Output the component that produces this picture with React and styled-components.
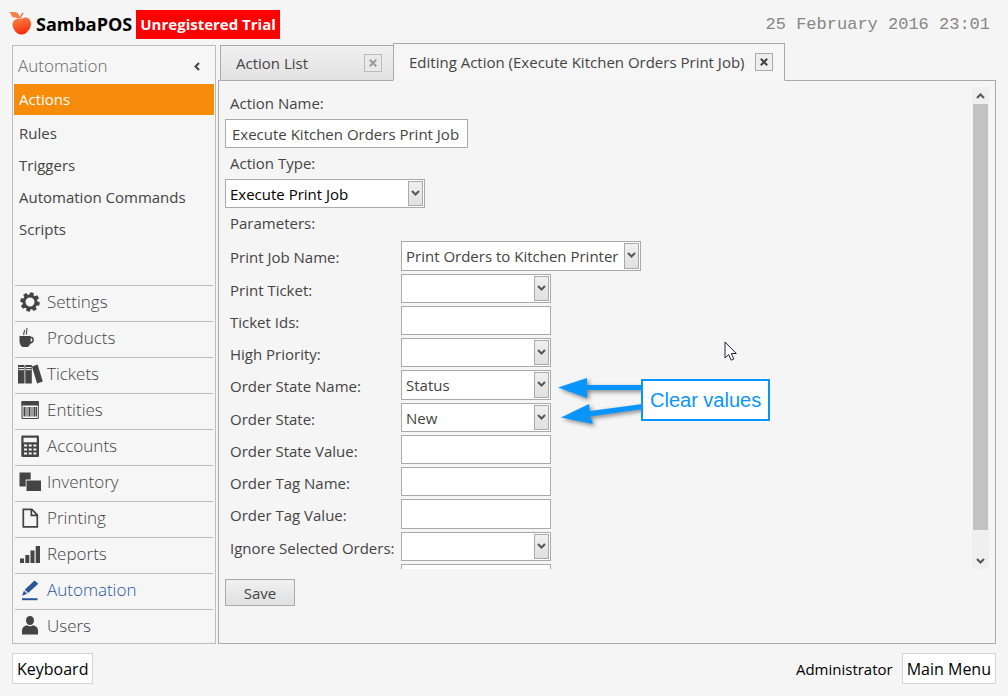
import React from "react";
import styled, { createGlobalStyle } from "styled-components";

const GlobalStyle = createGlobalStyle`
  * { box-sizing: border-box; }
  body {
    margin: 0;
    background: #f5f5f5;
    color: #444;
    font: 15px/20px "Open Sans", "Noto Sans", sans-serif;
  }
  button, input, select { font: inherit; color: inherit; margin: 0; padding: 0; }
  ul { list-style: none; margin: 0; padding: 0; }
  svg { display: block; }
`;

const Page = styled.div`
  display: flex;
  flex-direction: column;
  height: 100vh;
  padding: 0 12px;
`;

const Header = styled.header`
  display: flex;
  align-items: center;
  flex: none;
  height: 43px;
  padding: 5px 6px 0 0;
`;

const Brand = styled.h1`
  display: flex;
  align-items: center;
  gap: 3px;
  margin: 0 4px 0 -3px;
  color: #000;
  font-size: 18px;
  line-height: 28px;
  font-weight: 700;
`;

const TrialBadge = styled.strong`
  padding: 0 4px;
  background: #f00;
  color: #fff;
  font-size: 15px;
  line-height: 29px;
`;

const Clock = styled.time`
  margin-left: auto;
  padding-top: 2px;
  color: #868686;
  font-family: "Liberation Mono", monospace;
  font-size: 17px;
`;

const Body = styled.div`
  display: flex;
  flex: 1;
  gap: 2px;
  min-height: 0;
`;

const Sidebar = styled.nav`
  display: flex;
  flex-direction: column;
  flex: none;
  width: 204px;
  margin-top: 2px;
  padding: 0 1px;
  border: 1px solid #bcbcbc;
  background: #f6f6f6;
`;

const SidebarHead = styled.div`
  display: flex;
  align-items: center;
  justify-content: space-between;
  height: 38px;
  padding: 2px 11px 0 4px;
  color: #666;
  font-size: 17px;
  font-weight: 300;
`;

const IconButton = styled.button`
  display: grid;
  place-items: center;
  width: 12px;
  height: 18px;
  border: 0;
  background: none;
`;

const EntryLink = styled.a`
  display: block;
  margin-bottom: ${(p) => (p.$active ? 2 : 0)}px;
  padding-left: 5px;
  color: ${(p) => (p.$active ? "#fff" : "#444")};
  background: ${(p) => (p.$active ? "#f78c0a" : "transparent")};
  line-height: ${(p) => (p.$active ? 31 : 32)}px;
  text-decoration: none;
`;

const ModuleList = styled.ul`
  margin-top: auto;
  padding: 0 1px;
  li:last-child a { height: 34px; padding-bottom: 1px; }
`;

const ModuleLink = styled.a`
  display: flex;
  align-items: center;
  gap: 3px;
  height: 36px;
  padding: 0 0 3px 2px;
  border-top: 1px solid #bcbcbc;
  color: ${(p) => (p.$active ? "#2b579a" : "#444")};
  font-size: 17px;
  font-weight: 300;
  text-decoration: none;
  svg { flex: none; }
`;

const Workspace = styled.main`
  display: flex;
  flex-direction: column;
  flex: 1;
  min-width: 0;
`;

const Tabs = styled.div`
  display: flex;
  align-items: flex-end;
  flex: none;
  height: 38px;
  margin-bottom: -1px;
  padding-left: 2px;
  position: relative;
  z-index: 1;
`;

const Tab = styled.div`
  display: flex;
  align-items: center;
  justify-content: space-between;
  width: ${(p) => (p.$active ? 392 : 174)}px;
  height: ${(p) => (p.$active ? 38 : 36)}px;
  margin-right: -1px;
  padding: 0 11px 0 15px;
  border: 1px solid #aaa;
  border-bottom-color: ${(p) => (p.$active ? "#f5f5f5" : "#aaa")};
  background: ${(p) => (p.$active ? "#f6f6f6" : "linear-gradient(#f0f0f0, #e2e2e2)")};
`;

const TabTitle = styled.button`
  border: 0;
  background: none;
  white-space: nowrap;
`;

const TabClose = styled.button`
  display: grid;
  place-items: center;
  flex: none;
  width: 18px;
  height: 18px;
  border: 1px solid ${(p) => (p.$muted ? "#bbb" : "#aaa")};
  background: ${(p) => (p.$muted ? "#e9e9e9" : "#eee")};
  color: ${(p) => (p.$muted ? "#999" : "#444")};
`;

const Panel = styled.section`
  position: relative;
  display: flex;
  flex-direction: column;
  flex: 1;
  min-height: 0;
  padding: 6px 6px 37px;
  border: 1px solid #aaa;
`;

const ScrollArea = styled.div`
  display: flex;
  justify-content: space-between;
  flex: 1;
  min-height: 0;
`;

const Form = styled.div`
  flex: 1;
  padding-top: 1px;
  overflow: hidden;
`;

const Caption = styled.label`
  display: block;
  padding-left: 5px;
  line-height: 31px;
`;

const TextBox = styled.input`
  display: block;
  width: ${(p) => p.$width}px;
  height: 29px;
  padding: 0 6px;
  border: 1px solid #aaa;
  background: #fff;
`;

const Combo = styled.div`
  display: grid;
  grid-template-columns: 1fr 17px;
  width: ${(p) => p.$width}px;
  height: 29px;
  border: 1px solid #aaa;
  background: #fff;
  color: ${(p) => (p.$dark ? "#000" : "#444")};
`;

const ComboSelect = styled.select`
  grid-area: 1 / 1 / 2 / 3;
  appearance: none;
  min-width: 0;
  padding-left: 4px;
  border: 0;
  background: none;
`;

const ComboArrow = styled.span`
  grid-area: 1 / 2;
  display: grid;
  place-items: center;
  margin: 1px;
  padding-bottom: 2px;
  border: 1px solid #aaa;
  background: linear-gradient(#f0f0f0, #e0e0e0);
  pointer-events: none;
`;

const Parameters = styled.div`
  display: grid;
  gap: 3px;
  margin-top: 2px;
`;

const ParameterRow = styled.div`
  display: grid;
  grid-template: 100% / 176px 1fr;
  height: 29px;
  &:nth-child(4n + 1) { height: 30px; }
  & > * { height: 100%; }
  & > label { padding-left: 5px; line-height: 32px; white-space: nowrap; }
`;

const ScrollBar = styled.div`
  display: flex;
  flex-direction: column;
  width: 17px;
  background: #efefef;
`;

const ScrollButton = styled.button`
  display: grid;
  place-items: center;
  height: 17px;
  border: 0;
  background: none;
`;

const ScrollTrack = styled.div`
  flex: 1;
  padding: 0 1px 22px;
`;

const ScrollThumb = styled.div`
  height: 100%;
  background: #c2c2c2;
`;

const SaveButton = styled.button`
  flex: none;
  width: 70px;
  height: 27px;
  margin-top: 10px;
  border: 1px solid #aaa;
  background: linear-gradient(#f0f0f0, #e0e0e0);
`;

const Footer = styled.footer`
  display: flex;
  align-items: center;
  flex: none;
  gap: 9px;
  padding: 9px 0 12px;
  color: #000;
`;

const FooterButton = styled.button`
  height: 31px;
  padding: 0 4px;
  border: 1px solid #d4d4d4;
  background: #fff;
  font-size: 16px;
`;

const UserName = styled.span`
  margin-left: auto;
`;

const Arrows = styled.svg`
  position: absolute;
  left: 336px;
  top: 289px;
  filter: drop-shadow(2px 2px 2px rgba(0, 0, 0, 0.45));
`;

const Note = styled.div`
  position: absolute;
  left: 422px;
  top: 298px;
  padding: 0 7px;
  border: 2px solid #0895ff;
  background: #fff;
  color: #0895ff;
  font: 20px/38px "Liberation Sans", sans-serif;
  white-space: nowrap;
`;

const Pointer = styled.svg`
  position: absolute;
  left: 505px;
  top: 260px;
`;

const Chevron = ({ up }) => (
  <svg width="9" height="8" viewBox="0 0 9 8" fill="none" stroke="#555" strokeWidth="2">
    <path d={up ? "M1 6l3.500-3.500L8 6" : "M1 2l3.500 3.500L8 2"} />
  </svg>
);

const Cross = () => (
  <svg width="8" height="8" viewBox="0 0 8 8" stroke="currentColor" strokeWidth="2">
    <path d="M.8 .8l6.400 6.400M7.200 .8L.8 7.200" />
  </svg>
);

const Fruit = () => (
  <svg width="24" height="26" viewBox="0 0 24 26">
    <defs>
      <linearGradient id="fruit" x1="0" y1="0" x2="0.3" y2="1">
        <stop offset="0" stopColor="#ff8a50" />
        <stop offset="1" stopColor="#f52f08" />
      </linearGradient>
    </defs>
    <path fill="url(#fruit)" d="M12.500 8C15 5.500 20 6 21.500 10c1.300 4-.5 8-3 10.500-1.700 1.800-3 3-5.500 3-3.500.2-6-1.500-8-5-2-3.700-2-7.500.5-9.500 2-1.700 5-2 7-1z" />
    <path fill="#ff7d4a" d="M0 1c3 .4 7-.5 9 1.500 1 1.200 1.500 3 2.500 4.500C7 7 3.500 7 2.500 4.500 2 3 1.500 2 0 1z" />
    <path d="M11.500 7.500c0-2 1-4 2.700-5.500" fill="none" stroke="#e86030" strokeWidth="1.200" />
  </svg>
);

const gearTeeth = [0, 45, 90, 135, 180, 225, 270, 315];

const drawings = {
  Settings: (
    <>
      <circle cx="13" cy="12" r="6" fill="none" stroke="currentColor" strokeWidth="3" />
      {gearTeeth.map((a) => (
        <path key={a} d="M10.800 5.500l.4-3.200h3.600l.4 3.200z" transform={`rotate(${a + 12} 13 12)`} />
      ))}
    </>
  ),
  Products: (
    <>
      <path d="M2.500 10h11.200v5c0 3-1.400 5.200-3.200 6H5.700c-1.800-.8-3.200-3-3.200-6z" />
      <path d="M13 11.500h1.500c2.400 0 2.400 5-1.800 5.500" fill="none" stroke="currentColor" strokeWidth="1.500" />
      <path d="M7.200 9c-2-2 1.400-2.800 0-5M9.800 8.500C8 6 11 5 9.700 2" fill="none" stroke="currentColor" strokeWidth="1.100" />
    </>
  ),
  Tickets: (
    <>
      <path d="M1 3h6.500v18.500H1zM8.300 3h6.500v18.500H8.300zM14.900 4.500l5.700-1.900 5.200 17-5.700 1.900z" />
      <path d="M1.500 5.500h5.500M1.500 7.700h5.500M8.800 5.500h5.500M8.800 7.700h5.500" stroke="#f6f6f6" strokeWidth="1" />
    </>
  ),
  Entities: (
    <>
      <path d="M4.500 3h17.300v4.500H4.500z" />
      <path d="M5 4v16.500h16.300V4" fill="none" stroke="currentColor" />
      <path d="M7.500 9v9.500M12.500 9v9.500M17.500 9v9.500" stroke="currentColor" strokeWidth="2" />
      <path d="M10 9v9.500M15 9v9.500M19.500 9v9.500" stroke="currentColor" strokeWidth="1" />
    </>
  ),
  Accounts: (
    <>
      <path d="M5.500 1.500h15.300q1.200 0 1.200 1.200v19q0 1.200-1.200 1.200H5.500q-1.200 0-1.200-1.200v-19q0-1.200 1.200-1.200z" />
      <path fill="#f6f6f6" d="M6.500 3.700h13.300v4.500H6.500zM7 10.500h3v2H7zM11.700 10.500h3v2h-3zM16.400 10.500h3v2h-3zM7 14.500h3v2H7zM11.700 14.500h3v2h-3zM16.400 14.500h3v2h-3zM7 18.500h3v2H7zM11.700 18.500h3v2h-3zM16.400 18.500h3v2h-3z" />
    </>
  ),
  Inventory: <path d="M2.500 2.500h11.200v7h-5v7H2.500zM9.500 10.500H24V21H9.500z" />,
  Printing: (
    <path d="M6.300 3.300h8.500l5.500 5.500v12H6.300zM14.300 3.500v5.800h5.800" fill="none" stroke="currentColor" strokeWidth="1.700" />
  ),
  Reports: <path d="M3 16.500h4V21H3zM8.300 13h4v8h-4zM13.500 8.500h4V21h-4zM18.700 4H23v17h-4.300z" />,
  Automation: (
    <>
      <path d="M17.500 2.500l3.800 3.200L11.200 15l-3.500-3.200zM6.900 12.700l3.300 3L5 17.800z" />
      <path d="M5 20.200h15.500v2H5z" />
    </>
  ),
  Users: (
    <>
      <ellipse cx="13" cy="6.500" rx="4" ry="4.500" />
      <path d="M5 20.500v-4c0-3 2-4.500 5-5.200 1.500 1.200 4.500 1.200 6 0 3 .7 5 2.200 5 5.200v4z" />
    </>
  ),
};

const ModuleIcon = ({ name }) => (
  <svg width="27" height="24" viewBox="0 0 27 24" fill="currentColor" aria-hidden="true">
    {drawings[name]}
  </svg>
);

const entries = ["Actions", "Rules", "Triggers", "Automation Commands", "Scripts"];

const parameters = [
  { label: "Print Job Name:", value: "Print Orders to Kitchen Printer", combo: true, width: 240 },
  { label: "Print Ticket:", value: "", combo: true },
  { label: "Ticket Ids:", value: "" },
  { label: "High Priority:", value: "", combo: true },
  { label: "Order State Name:", value: "Status", combo: true },
  { label: "Order State:", value: "New", combo: true },
  { label: "Order State Value:", value: "" },
  { label: "Order Tag Name:", value: "" },
  { label: "Order Tag Value:", value: "" },
  { label: "Ignore Selected Orders:", value: "", combo: true },
  { label: "", value: "" },
];

const ComboBox = ({ id, value, width, dark }) => (
  <Combo $width={width} $dark={dark}>
    <ComboSelect id={id} defaultValue={value}>
      <option value={value}>{value}</option>
    </ComboSelect>
    <ComboArrow><Chevron /></ComboArrow>
  </Combo>
);

export default function App() {
  return (
    <Page>
      <GlobalStyle />
      <Header>
        <Brand><Fruit />SambaPOS</Brand>
        <TrialBadge>Unregistered Trial</TrialBadge>
        <Clock dateTime="2016-02-25T23:01">25 February 2016 23:01</Clock>
      </Header>
      <Body>
        <Sidebar>
          <SidebarHead>
            Automation
            <IconButton aria-label="Collapse">
              <svg width="8" height="9" viewBox="0 0 8 9" fill="none" stroke="#444" strokeWidth="2">
                <path d="M6 1L2.500 4.500 6 8" />
              </svg>
            </IconButton>
          </SidebarHead>
          <ul>
            {entries.map((name, i) => (
              <li key={name}><EntryLink href="#" $active={i === 0}>{name}</EntryLink></li>
            ))}
          </ul>
          <ModuleList>
            {Object.keys(drawings).map((name) => (
              <li key={name}>
                <ModuleLink href="#" $active={name === "Automation"}>
                  <ModuleIcon name={name} />{name}
                </ModuleLink>
              </li>
            ))}
          </ModuleList>
        </Sidebar>
        <Workspace>
          <Tabs>
            <Tab>
              <TabTitle>Action List</TabTitle>
              <TabClose $muted aria-label="Close Action List"><Cross /></TabClose>
            </Tab>
            <Tab $active>
              <TabTitle>Editing Action (Execute Kitchen Orders Print Job)</TabTitle>
              <TabClose aria-label="Close Editing Action"><Cross /></TabClose>
            </Tab>
          </Tabs>
          <Panel>
            <ScrollArea>
              <Form>
                <Caption htmlFor="action-name">Action Name:</Caption>
                <TextBox id="action-name" $width={243} defaultValue="Execute Kitchen Orders Print Job" />
                <Caption htmlFor="action-type">Action Type:</Caption>
                <ComboBox id="action-type" value="Execute Print Job" width={200} dark />
                <Caption as="div">Parameters:</Caption>
                <Parameters>
                  {parameters.map(({ label, value, combo, width = 150 }, i) => (
                    <ParameterRow key={i}>
                      <label htmlFor={`parameter-${i}`}>{label}</label>
                      {combo
                        ? <ComboBox id={`parameter-${i}`} value={value} width={width} />
                        : <TextBox id={`parameter-${i}`} $width={width} defaultValue={value} />}
                    </ParameterRow>
                  ))}
                </Parameters>
              </Form>
              <ScrollBar>
                <ScrollButton aria-label="Scroll up"><Chevron up /></ScrollButton>
                <ScrollTrack><ScrollThumb /></ScrollTrack>
                <ScrollButton aria-label="Scroll down"><Chevron /></ScrollButton>
              </ScrollBar>
            </ScrollArea>
            <SaveButton>Save</SaveButton>
            <Arrows width="92" height="62" viewBox="0 0 92 62" fill="#0895ff">
              <path d="M3 17.500L32 8v7h56v5H32v8z" />
              <path d="M6 47.500L34 34l1 7 53-7v5l-53 7.500L38 54z" />
            </Arrows>
            <Note>Clear values</Note>
            <Pointer width="14" height="21" viewBox="0 0 14 21">
              <path d="M1 1v16l3.700-3.500 2.500 5.700 2.600-1.200-2.500-5.500h5z" fill="#fff" stroke="#223" strokeWidth="1" />
            </Pointer>
          </Panel>
        </Workspace>
      </Body>
      <Footer>
        <FooterButton>Keyboard</FooterButton>
        <UserName>Administrator</UserName>
        <FooterButton>Main Menu</FooterButton>
      </Footer>
    </Page>
  );
}
